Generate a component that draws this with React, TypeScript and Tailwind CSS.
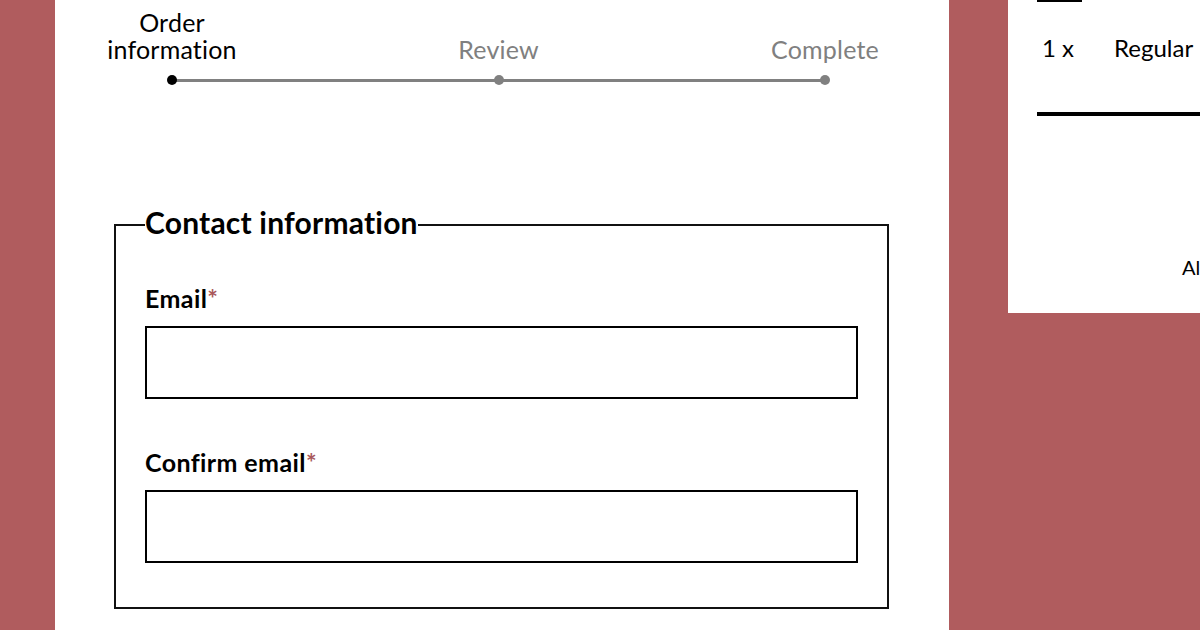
export default function App() {
  const steps = [
    { label: "Order information", active: true },
    { label: "Review", active: false },
    { label: "Complete", active: false },
  ];

  return (
    <div
      className="flex h-[630px] w-[1200px] overflow-hidden bg-[#b05c5e]"
      style={{ fontFamily: "Lato, 'Noto Sans', sans-serif" }}
    >
      <main className="ml-[55px] w-[894px] shrink-0 bg-white pt-[9px]">
        <div className="relative ml-[37px] flex w-[813px] justify-between">
          <div className="absolute bottom-[3.5px] left-[80px] right-[80px] h-[3px] bg-[#808080]" />
          {steps.map((s) => (
            <div key={s.label} className="flex w-[160px] flex-col items-center justify-end">
              <span
                className={`text-center text-[25px] leading-[27px] tracking-[0.2px] ${
                  s.active ? "w-[140px] text-black" : "text-[#808080]"
                }`}
              >
                {s.label}
              </span>
              <span
                className={`relative mt-[12px] h-[10px] w-[10px] rounded-full ${
                  s.active ? "bg-black" : "bg-[#808080]"
                }`}
              />
            </div>
          ))}
        </div>

        <fieldset className="ml-[59px] mt-[122px] w-[775px] border-2 border-[#111] px-[29px] pb-[44px] pt-0">
          <legend className="p-0 pb-[6px] text-[30px] font-bold leading-[30px] tracking-[0.2px] text-black">
            Contact information
          </legend>
          <label className="mt-[39px] block text-[25px] font-bold leading-[32px] tracking-[0.4px] text-black">
            Email<span className="text-[#a9585b]">*</span>
          </label>
          <input className="mt-[12px] block h-[73px] w-full border-2 border-black outline-none" type="email" />
          <label className="mt-[47px] block text-[25px] font-bold leading-[32px] tracking-[0.4px] text-black">
            Confirm email<span className="text-[#a9585b]">*</span>
          </label>
          <input className="mt-[12px] block h-[73px] w-full border-2 border-black outline-none" type="email" />
        </fieldset>
      </main>

      <aside className="ml-[59px] h-[313px] w-[400px] shrink-0 bg-white pl-[29px]">
        <div className="h-[2px] w-[45px] bg-black" />
        <div className="mt-[30px] flex text-[24px] leading-[32px] text-black">
          <span className="ml-[5px] w-[72px]">1 x</span>
          <span>Regular</span>
        </div>
        <div className="mt-[48px] h-[4px] w-full bg-black" />
        <p className="ml-[145px] mt-[137px] text-[20px] leading-[28px] text-black">All prices in EUR</p>
      </aside>
    </div>
  );
}
